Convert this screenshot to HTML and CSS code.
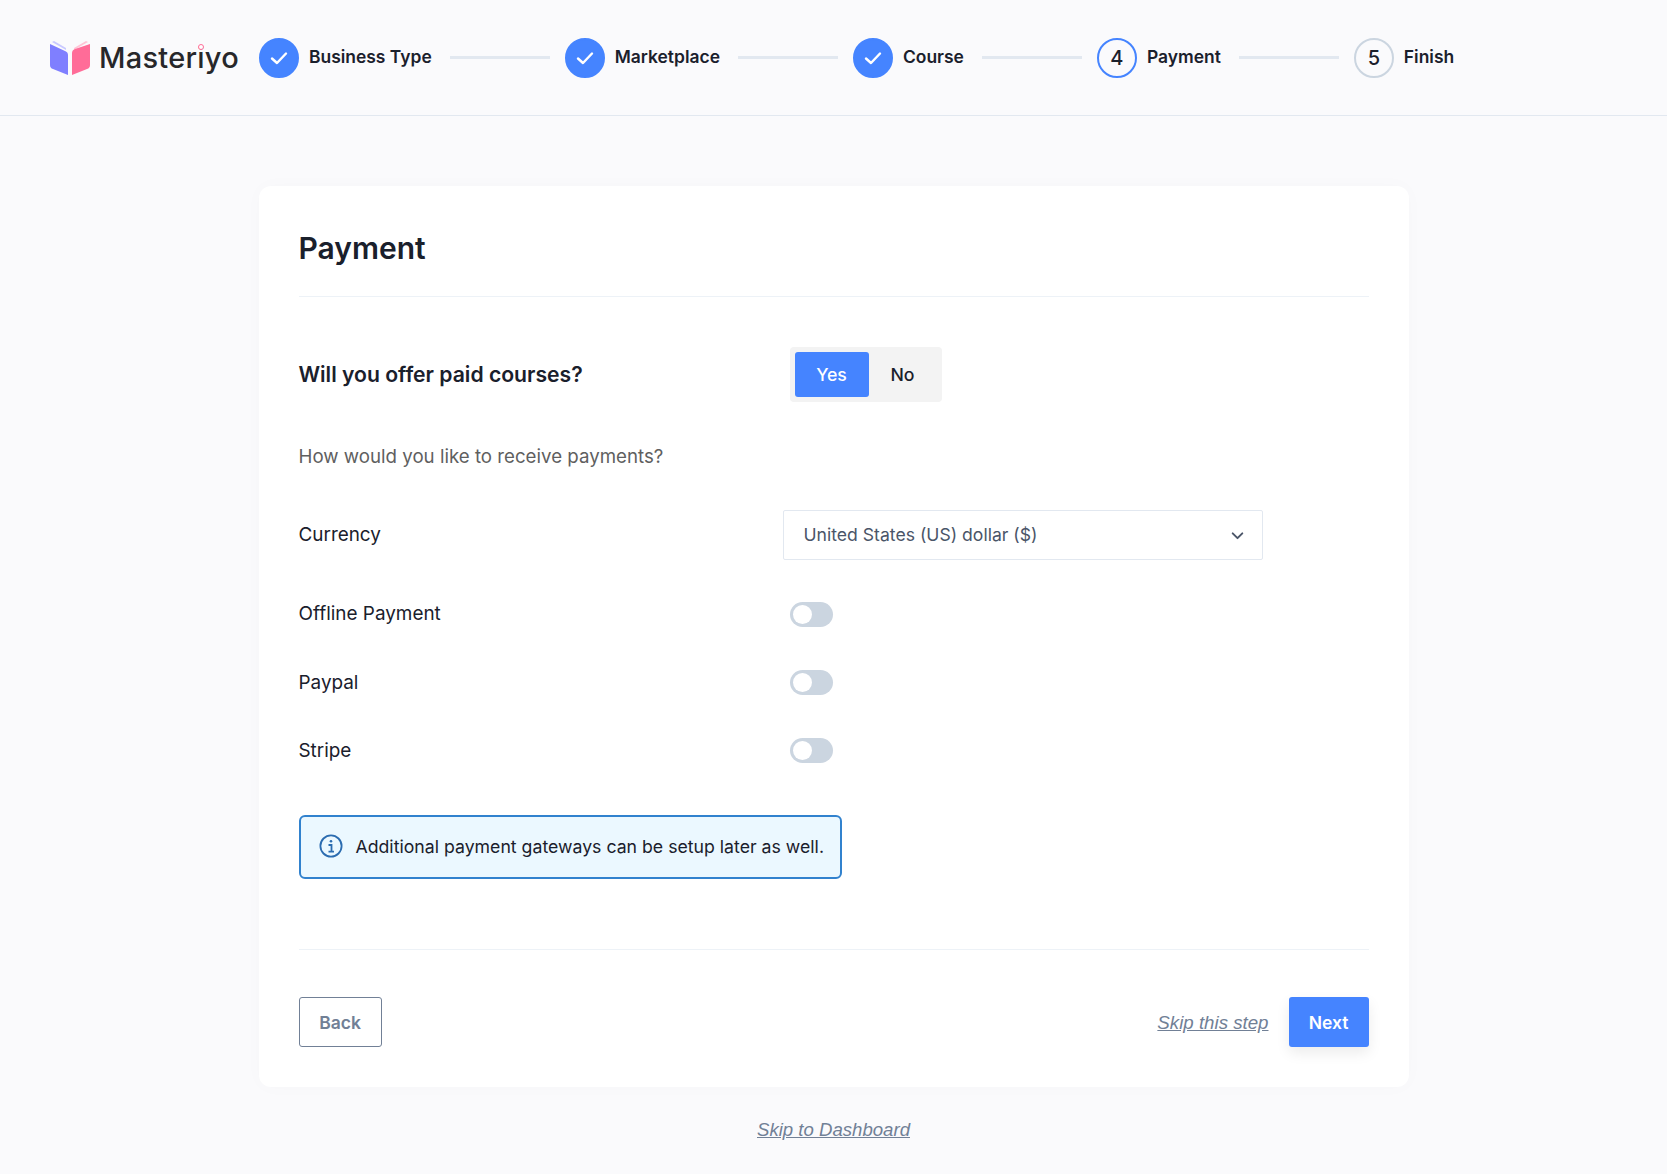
FILE: index.html
```html
<!DOCTYPE html>
<html lang="en">
<head>
    <meta charset="UTF-8">
    <meta name="viewport" content="width=device-width, initial-scale=1.0">
    <title>Masteriyo Setup - Payment</title>
    <link rel="stylesheet" href="styles.css">
</head>
<body>
    <header class="topbar">
        <div class="logo">
            <svg class="logo-book" viewBox="0 0 40 34" width="40" height="34">
                <path d="M2 1 L16 9 L16 7 L4 0 Z" fill="#c9c9ff"/>
                <path d="M38 1 L24 9 L24 7 L36 0 Z" fill="#ffc4d6"/>
                <path d="M0 3 L15 10 Q18 11 18 14 L18 34 L3 28 Q0 27 0 24 Z" fill="#7f7fff"/>
                <path d="M40 3 L25 8 Q22 9 22 12 L22 34 L37 28 Q40 27 40 24 Z" fill="#ff6c98"/>
            </svg>
            <span class="logo-text">Masteriyo<span class="logo-dot"></span></span>
        </div>
        <ol class="steps">
            <li class="step done">
                <span class="step-circle">
                    <svg viewBox="0 0 24 24" width="24" height="24"><path d="M5 12.5 L10 17 L19 7.5" fill="none" stroke="#fff" stroke-width="2.4" stroke-linecap="round" stroke-linejoin="round"/></svg>
                </span>
                <span class="step-label">Business Type</span>
            </li>
            <li class="step-line"></li>
            <li class="step done">
                <span class="step-circle">
                    <svg viewBox="0 0 24 24" width="24" height="24"><path d="M5 12.5 L10 17 L19 7.5" fill="none" stroke="#fff" stroke-width="2.4" stroke-linecap="round" stroke-linejoin="round"/></svg>
                </span>
                <span class="step-label">Marketplace</span>
            </li>
            <li class="step-line"></li>
            <li class="step done">
                <span class="step-circle">
                    <svg viewBox="0 0 24 24" width="24" height="24"><path d="M5 12.5 L10 17 L19 7.5" fill="none" stroke="#fff" stroke-width="2.4" stroke-linecap="round" stroke-linejoin="round"/></svg>
                </span>
                <span class="step-label">Course</span>
            </li>
            <li class="step-line"></li>
            <li class="step active">
                <span class="step-circle">4</span>
                <span class="step-label">Payment</span>
            </li>
            <li class="step-line"></li>
            <li class="step">
                <span class="step-circle">5</span>
                <span class="step-label">Finish</span>
            </li>
        </ol>
    </header>

    <main class="page">
        <section class="card">
            <h1 class="card-title">Payment</h1>

            <div class="question-row">
                <div class="question">Will you offer paid courses?</div>
                <div class="segmented">
                    <button class="seg-btn selected">Yes</button>
                    <button class="seg-btn">No</button>
                </div>
            </div>

            <p class="hint">How would you like to receive payments?</p>

            <div class="field-row currency-row">
                <label class="field-label">Currency</label>
                <div class="select">
                    <span class="select-value">United States (US) dollar ($)</span>
                    <svg viewBox="0 0 24 24" width="21" height="21"><path d="M6.5 9.5 L12 15 L17.5 9.5" fill="none" stroke="#4a5568" stroke-width="2.2" stroke-linecap="round" stroke-linejoin="round"/></svg>
                </div>
            </div>

            <div class="field-row toggle-row">
                <label class="field-label">Offline Payment</label>
                <span class="toggle"><span class="knob"></span></span>
            </div>
            <div class="field-row toggle-row">
                <label class="field-label">Paypal</label>
                <span class="toggle"><span class="knob"></span></span>
            </div>
            <div class="field-row toggle-row">
                <label class="field-label">Stripe</label>
                <span class="toggle"><span class="knob"></span></span>
            </div>

            <div class="notice">
                <svg viewBox="0 0 24 24" width="24" height="24">
                    <circle cx="12" cy="12" r="10.6" fill="none" stroke="#2b6cb0" stroke-width="1.8"/>
                    <circle cx="12" cy="7.2" r="1.3" fill="#2b6cb0"/>
                    <path d="M9.5 11 H12.5 V17.4 M9.5 17.6 H15" fill="none" stroke="#2b6cb0" stroke-width="1.8"/>
                </svg>
                <span>Additional payment gateways can be setup later as well.</span>
            </div>

            <div class="card-footer">
                <button class="btn-back">Back</button>
                <div class="footer-right">
                    <a class="skip-link skip-step" href="#">Skip this step</a>
                    <button class="btn-next">Next</button>
                </div>
            </div>
        </section>

        <a class="skip-link dashboard-link" href="#">Skip to Dashboard</a>
    </main>
</body>
</html>
```

FILE: styles.css
```css
* {
    box-sizing: border-box;
}
body {
    margin: 0;
    background-color: #fafafc;
    color: #1a202c;
    font-family: Inter, "Noto Sans", sans-serif;
    font-size: 18px;
}
button {
    font-family: inherit;
    cursor: pointer;
}

/* top bar */
.topbar {
    display: flex;
    align-items: center;
    height: 116px;
    padding: 0 0 0 50px;
    border-bottom: 1px solid #e2e8f0;
}
.logo {
    display: flex;
    align-items: center;
    width: 190px;
    margin-right: 19px;
}
.logo-book {
    margin-right: 9px;
    flex-shrink: 0;
}
.logo-text {
    position: relative;
    font-family: Inter, sans-serif;
    font-size: 29px;
    font-weight: 500;
    letter-spacing: 0.25px;
    color: #27272a;
}
.logo-dot {
    position: absolute;
    left: 99px;
    top: 4px;
    width: 6px;
    height: 6px;
    border: 1.5px solid #ff6c98;
    border-radius: 50%;
    background: #fff;
}
.steps {
    display: flex;
    align-items: center;
    list-style: none;
    margin: 0;
    padding: 0;
}
.step {
    display: flex;
    align-items: center;
}
.step-circle {
    display: flex;
    align-items: center;
    justify-content: center;
    width: 40px;
    height: 40px;
    border: 2px solid #cbd5e0;
    border-radius: 50%;
    font-size: 20px;
    font-weight: 500;
    color: #1a202c;
}
.step.done .step-circle {
    background: #4584ff;
    border-color: #4584ff;
}
.step.active .step-circle {
    border-color: #4584ff;
}
.step-label {
    margin-left: 10px;
    margin-top: -2px;
    font-size: 17.45px;
    font-weight: 600;
    color: #1a202c;
}
.step-line {
    width: 100px;
    height: 3px;
    margin: 0 15px 0 18px;
    background: #e2e8f0;
}

/* main card */
.page {
    display: flex;
    flex-direction: column;
    align-items: center;
    padding-top: 70px;
}
.card {
    width: 1150px;
    height: 901px;
    padding: 40px;
    background: #fff;
    border-radius: 12px;
    box-shadow: 0 0 20px rgba(0, 0, 0, 0.02);
}
.card-title {
    margin: -1px 0 0;
    padding-bottom: 25px;
    border-bottom: 1px solid #edf2f7;
    font-size: 30px;
    line-height: 46px;
    font-weight: 600;
}
.question-row {
    display: flex;
    align-items: center;
    margin-top: 50px;
}
.question {
    width: 491px;
    font-size: 21.15px;
    font-weight: 600;
}
.segmented {
    display: flex;
    width: 152px;
    height: 55px;
    padding: 5px;
    background: #f3f3f3;
    border-radius: 4px;
}
.seg-btn {
    width: 68px;
    flex-shrink: 0;
    padding: 0;
    border: none;
    border-radius: 3px;
    background: transparent;
    font-size: 17.7px;
    font-weight: 500;
    color: #1a202c;
}
.seg-btn.selected {
    width: 74px;
    background: #4584ff;
    color: #fff;
}
.hint {
    margin: 41px 0 0;
    font-size: 18.7px;
    line-height: 28px;
    color: #5f5f5f;
}
.field-row {
    display: flex;
    align-items: center;
}
.field-label {
    font-size: 18.9px;
    color: #1a202c;
}
.currency-row {
    justify-content: flex-start;
    margin-top: 39px;
}
.currency-row .field-label {
    width: 484px;
    margin-bottom: 2px;
}
.select {
    display: flex;
    align-items: center;
    justify-content: space-between;
    width: 480px;
    height: 50px;
    padding: 0 14px 0 20px;
    border: 1px solid #e2e8f0;
    border-radius: 2px;
    font-size: 17.6px;
    color: #4a5568;
}
.select-value {
    margin-bottom: 2px;
}
.toggle-row {
    height: 26px;
    margin-top: 42px;
}
.currency-row + .toggle-row {
    margin-top: 41px;
}
.toggle-row .field-label {
    width: 491px;
}
.currency-row + .toggle-row .field-label {
    margin-bottom: 2px;
}
.toggle {
    display: block;
    width: 43px;
    height: 25px;
    padding: 3px;
    border-radius: 13px;
    background: #cbd5e0;
}
.knob {
    display: block;
    width: 19px;
    height: 19px;
    border-radius: 50%;
    background: #fff;
}
.notice {
    display: flex;
    align-items: center;
    width: 543px;
    height: 64px;
    margin-top: 52px;
    padding: 0 0 2px 18px;
    border: 2px solid #3182ce;
    border-radius: 6px;
    background: #ebf8ff;
    font-size: 17.7px;
}
.notice svg {
    margin-right: 13px;
    flex-shrink: 0;
}
.card-footer {
    display: flex;
    align-items: center;
    justify-content: space-between;
    margin-top: 70px;
    padding-top: 47px;
    border-top: 1px solid #edf2f7;
}
.footer-right {
    display: flex;
    align-items: center;
}
.btn-back {
    width: 83px;
    height: 50px;
    border: 1px solid #718096;
    border-radius: 3px;
    background: #fff;
    font-size: 17.5px;
    font-weight: 600;
    color: #718096;
}
.btn-next {
    width: 80px;
    height: 50px;
    margin-left: 20px;
    border: none;
    border-radius: 3px;
    background: #4584ff;
    box-shadow: 0 6px 14px rgba(0, 0, 0, 0.08);
    font-size: 17.5px;
    font-weight: 600;
    color: #fff;
}
.skip-link {
    font-family: "Liberation Sans", Arial, sans-serif;
    font-size: 18.6px;
    font-style: italic;
    color: #718096;
}
.skip-step {
    margin-top: 2px;
    font-size: 18.7px;
}
.dashboard-link {
    margin-top: 32px;
}
```
